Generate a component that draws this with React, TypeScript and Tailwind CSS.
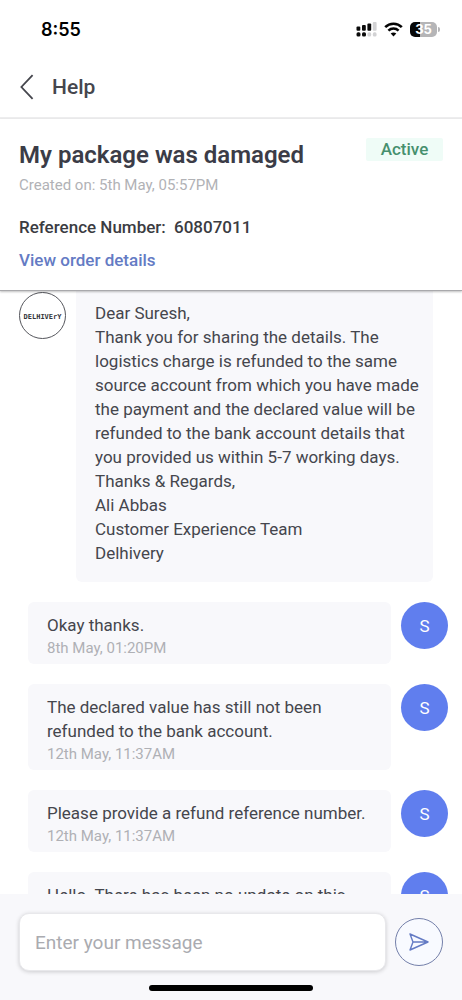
const agentMessage = `Dear Suresh,
Thank you for sharing the details. The
logistics charge is refunded to the same
source account from which you have made
the payment and the declared value will be
refunded to the bank account details that
you provided us within 5-7 working days.
Thanks & Regards,
Ali Abbas
Customer Experience Team
Delhivery`;

const replies: { text: string; time?: string }[] = [
  { text: "Okay thanks.", time: "8th May, 01:20PM" },
  {
    text: "The declared value has still not been\nrefunded to the bank account.",
    time: "12th May, 11:37AM",
  },
  { text: "Please provide a refund reference number.", time: "12th May, 11:37AM" },
  { text: "Hello. There has been no update on this" },
];

function StatusBar() {
  return (
    <div className="flex h-[57px] shrink-0 items-center justify-between pt-[2px] pr-[22px] pl-[41px]">
      <span className="font-[Inter,sans-serif] text-[18px] leading-6 font-semibold text-black">8:55</span>
      <div className="flex items-center gap-[7px]">
        <svg width="21" height="15" viewBox="0 0 21 15" aria-hidden="true">
          <g fill="#0b0b0b">
            <rect x="0.5" y="4.5" width="3.8" height="4.2" rx="1" />
            <rect x="6" y="3" width="3.8" height="5.7" rx="1" />
            <rect x="11.4" y="1.5" width="3.8" height="7.2" rx="1" />
            <rect x="0.5" y="10.3" width="4" height="4.2" rx="1.6" />
            <rect x="6" y="10.3" width="4" height="4.2" rx="1.6" />
          </g>
          <g fill="#d2d2d4">
            <rect x="16.8" y="0" width="3.8" height="8.7" rx="1" />
            <rect x="11.4" y="10.3" width="3.8" height="4.2" rx="1.6" />
            <rect x="16.8" y="10.3" width="3.8" height="4.2" rx="1.6" />
          </g>
        </svg>
        <svg width="19" height="15" viewBox="0 0 19 15" fill="none" stroke="#050505" aria-hidden="true">
          <path d="M1.2 5.2C5.8 .6 13.2 .6 17.8 5.2" strokeWidth="2.6" />
          <path d="M4.4 8.6c2.9-2.8 7.3-2.8 10.2 0" strokeWidth="2.5" />
          <path d="M9.5 14.4 6.7 11.5c1.6-1.4 4-1.4 5.6 0Z" fill="#050505" stroke="none" />
        </svg>
        <div className="flex items-center gap-px">
          <div className="flex h-[15px] w-[27px] items-center justify-center rounded-[5px] bg-[linear-gradient(to_right,#080808_36%,#b5b5b7_36%)] font-[Inter,sans-serif] text-[13px] leading-none font-bold text-white">
            35
          </div>
          <div className="h-[5px] w-[2px] rounded-r-full bg-[#b5b5b7]" />
        </div>
      </div>
    </div>
  );
}

function Reply({ text, time }: { text: string; time?: string }) {
  return (
    <li className="flex items-start gap-[10px] pr-[14px] pl-7">
      <div className="min-w-0 flex-1 rounded-md bg-[#f8f8fb] pt-[11px] pb-[5px] pl-[19px]">
        <p className="text-[17px] leading-6 whitespace-pre-line">{text}</p>
        {time && <time className="block text-[15px] leading-[22px] text-[#afb0b5]">{time}</time>}
      </div>
      <div className="flex size-[47px] shrink-0 items-center justify-center rounded-full bg-[#607eee] pt-[2px] text-[17px] text-white">
        S
      </div>
    </li>
  );
}

export default function App() {
  return (
    <div className="flex h-dvh flex-col bg-white font-[Roboto,sans-serif] text-[#45464d]">
      <StatusBar />
      <nav className="flex h-[62px] shrink-0 items-center gap-[18px] border-b-2 border-[#ededee] pl-5">
        <button type="button" aria-label="Back">
          <svg width="14" height="26" viewBox="0 0 14 26" fill="none" stroke="#45464d" strokeWidth="1.8" aria-hidden="true">
            <path d="M12.6 1.2 1.4 13l11.2 11.8" />
          </svg>
        </button>
        <h1 className="text-[21px] leading-7 font-medium">Help</h1>
      </nav>
      <header className="z-10 shrink-0 border-b border-[#a9a9ac] bg-white pt-[19px] pr-[19px] pb-[18px] pl-[19px] shadow-[0_1px_2px_rgba(0,0,0,0.25)]">
        <div className="flex items-start justify-between">
          <h2 className="pt-[1px] text-[24px] leading-8 font-semibold text-[#3b3c47]">My package was damaged</h2>
          <span className="flex h-[23px] w-[77px] items-center justify-center rounded-xs bg-[#effcf7] text-[17px] font-medium text-[#46906e]">
            Active
          </span>
        </div>
        <p className="pt-[4px] text-[15px] leading-5 text-[#b1b2b6]">Created on: 5th May, 05:57PM</p>
        <p className="pt-5 text-[17px] leading-6 font-medium text-[#3b3c42]">
          Reference Number: <span className="pl-1">60807011</span>
        </p>
        <a href="#order" className="mt-[9px] block text-[17px] leading-6 font-medium text-[#647bc4]">
          View order details
        </a>
      </header>
      <main className="min-h-0 flex-1 overflow-hidden">
        <ul className="flex flex-col gap-5">
          <li className="flex items-start gap-[10px] pr-[29px] pl-[19px]">
            <div className="mt-[1px] flex size-[47px] shrink-0 items-center justify-center rounded-full border border-[#55565c] bg-white">
              <svg width="41" height="10" viewBox="0 0 41 10" role="img" aria-label="Delhivery">
                <text x="20.5" y="8" textAnchor="middle" fontFamily="DejaVu Sans Mono" fontWeight="700" fontSize="7" fill="#333439">
                  DELHIVErY
                </text>
              </svg>
            </div>
            <p className="min-w-0 flex-1 rounded-b-md bg-[#f8f8fb] pt-[10px] pb-[17px] pl-[19px] text-[17px] leading-6 whitespace-pre-line">
              {agentMessage}
            </p>
          </li>
          {replies.map((reply) => (
            <Reply key={reply.text} {...reply} />
          ))}
        </ul>
      </main>
      <footer className="shrink-0 bg-[#f8f8fb] pt-[19px] pb-[9px]">
        <form className="flex items-center gap-[9px] px-[19px]" onSubmit={(e) => e.preventDefault()}>
          <input
            type="text"
            aria-label="Enter your message"
            placeholder="Enter your message"
            className="h-[58px] min-w-0 flex-1 rounded-[10px] border border-[#e8e8eb] bg-white pl-[15px] text-[19px] shadow-[0_1px_4px_rgba(0,0,0,0.18)] outline-none placeholder:text-[#aaabb0]"
          />
          <button
            type="submit"
            aria-label="Send message"
            className="flex size-12 shrink-0 items-center justify-center rounded-full border border-[#7480aa] bg-[#f8faff]"
          >
            <svg width="22" height="20" viewBox="0 0 22 20" fill="none" stroke="#647bc4" strokeWidth="1.4" strokeLinejoin="round" aria-hidden="true">
              <path d="M2 2 20 10 2 18l3-8Z M5 10h15" />
            </svg>
          </button>
        </form>
        <div className="mx-auto mt-[14px] h-[6px] w-[164px] rounded-full bg-black" />
      </footer>
    </div>
  );
}
